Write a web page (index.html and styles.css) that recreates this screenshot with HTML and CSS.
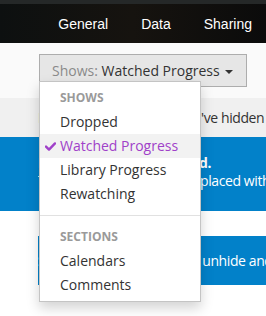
FILE: index.html
```html
<!DOCTYPE html>
<html lang="en">
<head>
    <meta charset="utf-8">
    <title>Settings</title>
    <link rel="stylesheet" href="styles.css">
</head>
<body>
    <div class="header">
        <a class="nav-link" href="#">General</a>
        <a class="nav-link" href="#">Data</a>
        <a class="nav-link" href="#">Sharing</a>
    </div>

    <div class="toolbar">
        <div class="dropdown">
            <button class="dropdown-toggle" type="button">
                <span class="label">Shows:</span> Watched Progress <span class="caret"></span>
            </button>
            <ul class="dropdown-menu">
                <li class="dropdown-header">Shows</li>
                <li class="item">Dropped</li>
                <li class="item active">
                    <svg class="check" width="11" height="9" viewBox="0 0 11 9">
                        <path d="M1 4.6 L4 7.6 L10 1.4" fill="none" stroke="currentColor" stroke-width="2.4" stroke-linecap="round" stroke-linejoin="round"/>
                    </svg>
                    Watched Progress
                </li>
                <li class="item">Library Progress</li>
                <li class="item">Rewatching</li>
                <li class="divider"></li>
                <li class="dropdown-header">Sections</li>
                <li class="item">Calendars</li>
                <li class="item">Comments</li>
            </ul>
        </div>
    </div>

    <div class="notice">
        <span class="lead">Below are all the shows you</span>'ve hidden from progress.
    </div>

    <div class="alert">
        <div class="alert-title"><span class="lead">Hidden shows are filtere</span>d.</div>
        <div class="alert-text"><span class="lead">They will be re</span>placed with the next show.</div>
    </div>

    <div class="content">
        <div class="alert alert-small">
            <span class="lead">Select items to</span> unhide and restore them.
        </div>
    </div>
</body>
</html>
```

FILE: styles.css
```css
* {
    box-sizing: border-box;
}

html,
body {
    height: 100%;
}

body {
    margin: 0;
    background: white;
    font-family: "Open Sans", sans-serif;
    font-size: 14px;
    color: #333;
}

/* top navigation */

.header {
    height: 43px;
    border-top: 4px solid #252828;
    background: linear-gradient(to right, #0d1010, #16130f 50%, #0b0b0b);
    display: flex;
    align-items: center;
    justify-content: flex-end;
    gap: 33px;
    padding-right: 14px;
}

.nav-link {
    color: white;
    text-decoration: none;
    font-family: "Liberation Sans", Arial, sans-serif;
    font-size: 14px;
}

/* filter dropdown */

.toolbar {
    height: 55px;
    background: #fafafa;
    padding: 11px 0 0 39px;
}

.dropdown {
    position: relative;
    display: inline-block;
}

.dropdown-toggle {
    width: 208px;
    height: 33px;
    padding: 0 11px 0 12px;
    border: 1px solid #adadad;
    border-radius: 0;
    background: #e6e6e6;
    font-family: "Open Sans", sans-serif;
    font-size: 14px;
    color: #333;
    text-align: left;
    white-space: nowrap;
}

.dropdown-toggle .label {
    color: #8a8a8a;
}

.caret {
    display: inline-block;
    width: 0;
    height: 0;
    margin-left: 2px;
    vertical-align: middle;
    border-top: 4px solid #333;
    border-left: 4px solid transparent;
    border-right: 4px solid transparent;
}

.dropdown-menu {
    position: absolute;
    top: 27px;
    left: 0;
    z-index: 10;
    width: 162px;
    margin: 0;
    padding: 4px 0;
    list-style: none;
    background: white;
    border: 1px solid #c4c4c4;
    box-shadow: 0 6px 12px rgba(0, 0, 0, 0.175);
}

.dropdown-menu li {
    position: relative;
    height: 24px;
    line-height: 24px;
    padding: 0 20px;
    white-space: nowrap;
}

.dropdown-menu .dropdown-header {
    font-size: 12px;
    font-weight: 700;
    text-transform: uppercase;
    color: #9a9a9a;
}

.dropdown-menu .item {
    font-size: 14px;
    color: #333;
}

.dropdown-menu .item.active {
    background: #f2f2f2;
    color: #a041c9;
}

.dropdown-menu .check {
    position: absolute;
    left: 5px;
    top: 8px;
}

.dropdown-menu .divider {
    height: 1px;
    margin: 9px 0;
    padding: 0;
    background: #e1e1e1;
}

/* page content behind the menu */

.lead {
    display: inline-block;
    width: 163px;
    overflow: hidden;
    white-space: nowrap;
    vertical-align: bottom;
}

.notice {
    height: 39px;
    line-height: 39px;
    padding-left: 38px;
    background: #f0f0f0;
    white-space: nowrap;
    overflow: hidden;
    letter-spacing: -0.4px;
}

.alert {
    height: 74px;
    padding: 17px 0 0 38px;
    background: #0281c9;
    color: white;
    white-space: nowrap;
    overflow: hidden;
    letter-spacing: -0.4px;
}

.alert-title {
    font-weight: 700;
    line-height: 18px;
}

.alert-title .lead {
    width: 161px;
}

.alert-text {
    line-height: 18px;
}

.alert-text .lead {
    width: 162px;
}

.content {
    padding: 25px 0 0 38px;
}

.alert.alert-small {
    height: 49px;
    line-height: 49px;
    padding: 0;
}

.alert-small .lead {
    width: 161px;
}
```
